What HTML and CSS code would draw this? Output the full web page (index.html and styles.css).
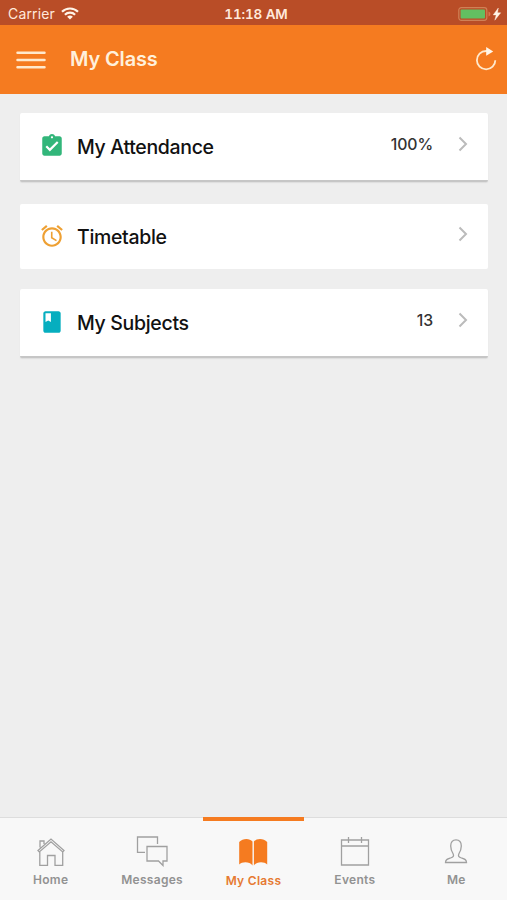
FILE: index.html
```html
<!DOCTYPE html>
<html lang="en">

<head>
    <meta charset="UTF-8">
    <meta name="viewport" content="width=device-width, initial-scale=1.0">
    <title>My Class</title>
    <link rel="stylesheet" href="styles.css">
</head>

<body>

    <!-- Status bar -->
    <div class="status-bar">
        <div class="carrier">
            <span>Carrier</span>
            <svg width="18" height="13" viewBox="0 0 18 13" fill="none" stroke="#fff4e8" stroke-width="2.2">
                <path d="M1 4.8a11.4 11.4 0 0 1 16 0" />
                <path d="M3.9 7.8a7.3 7.3 0 0 1 10.2 0" />
                <path d="M9 12.6L6.1 9.8a4.2 4.2 0 0 1 5.8 0z" fill="#fff4e8" stroke="none" />
            </svg>
        </div>
        <div class="time">11:18 AM</div>
        <div class="battery">
            <svg width="44" height="16" viewBox="0 0 44 16">
                <rect x="0.8" y="1.7" width="28" height="12.6" rx="2.5" fill="none" stroke="#cf8156" stroke-width="1.2" />
                <rect x="2.6" y="3.5" width="24.4" height="9" rx="1" fill="#63bf61" />
                <path d="M30.5 5.5q2 .8 2 2.5t-2 2.5z" fill="#dc7550" />
                <path d="M40.3 2l-5.1 6.9h3l-1.4 5.3 5.9-7.4h-3.2z" fill="#fff4e8" stroke="#fff4e8" stroke-width="0.4" />
            </svg>
        </div>
    </div>

    <!-- Header -->
    <div class="header">
        <svg class="menu" width="30" height="20" viewBox="0 0 30 20" stroke="#ffe9cd" stroke-width="2.5" stroke-linecap="round">
            <path d="M1.5 2.8h27M1.5 10.1h27M1.5 17.3h27" />
        </svg>
        <h1>My Class</h1>
        <svg class="refresh" width="22" height="26" viewBox="0 0 22 26">
            <path d="M20.3 13.2a9.2 9.2 0 1 1-9.2-9.2h2" fill="none" stroke="#ffe9cd" stroke-width="1.8" />
            <path d="M11.2.1l7 4.3-7 4.3z" fill="#fff5e8" />
        </svg>
    </div>

    <!-- Cards -->
    <ul class="cards">
        <li class="card raised">
            <svg class="icon" width="26" height="26" viewBox="0 0 24 24" fill="#32b67a">
                <path d="M19 3h-4.18C14.4 1.84 13.3 1 12 1s-2.4.84-2.82 2H5c-1.1 0-2 .9-2 2v14c0 1.1.9 2 2 2h14c1.1 0 2-.9 2-2V5c0-1.1-.9-2-2-2zm-7 0c.55 0 1 .45 1 1s-.45 1-1 1-1-.45-1-1 .45-1 1-1zm-2 14l-4-4 1.41-1.41L10 14.17l6.59-6.59L18 9l-8 8z" />
            </svg>
            <span class="label">My Attendance</span>
            <span class="value">100%</span>
            <svg class="chevron" width="10" height="16" viewBox="0 0 10 16">
                <path d="M1.5 1.5L8 8l-6.5 6.5" />
            </svg>
        </li>
        <li class="card flat">
            <svg class="icon" width="26" height="26" viewBox="0 0 24 24" fill="#eea033">
                <path d="M22 5.72l-4.6-3.86-1.29 1.53 4.6 3.86L22 5.72zM7.88 3.39L6.6 1.86 2 5.71l1.29 1.53 4.59-3.85zM12.5 8H11v6l4.75 2.85.75-1.23-4-2.37V8zM12 4c-4.97 0-9 4.03-9 9s4.02 9 9 9c4.97 0 9-4.03 9-9s-4.03-9-9-9zm0 16c-3.87 0-7-3.13-7-7s3.13-7 7-7 7 3.13 7 7-3.13 7-7 7z" />
            </svg>
            <span class="label">Timetable</span>
            <svg class="chevron" width="10" height="16" viewBox="0 0 10 16">
                <path d="M1.5 1.5L8 8l-6.5 6.5" />
            </svg>
        </li>
        <li class="card raised">
            <svg class="icon" width="26" height="26" viewBox="0 0 24 24" fill="#06aebf">
                <path d="M18 2H6c-1.1 0-2 .9-2 2v16c0 1.1.9 2 2 2h12c1.1 0 2-.9 2-2V4c0-1.1-.9-2-2-2zM6 4h5v8l-2.5-1.5L6 12V4z" />
            </svg>
            <span class="label">My Subjects</span>
            <span class="value">13</span>
            <svg class="chevron" width="10" height="16" viewBox="0 0 10 16">
                <path d="M1.5 1.5L8 8l-6.5 6.5" />
            </svg>
        </li>
    </ul>

    <!-- Bottom tabs -->
    <div class="tabs">
        <div class="tab">
            <svg width="32" height="32" viewBox="0 0 32 32">
                <path d="M3 15.5L16 4l13 11.5-1.3 1.4L16 6.8 4.3 16.9zM5 12.5V6h4v3M4.8 17v13.3h7.7v-9.8h7.5v9.8h7.7V17" />
            </svg>
            <span>Home</span>
        </div>
        <div class="tab">
            <svg width="32" height="32" viewBox="0 0 32 32">
                <path d="M9 17.3H1.5V2h20v7" />
                <path d="M11 11.5h20V26h-4v4.5L22.5 26H11z" />
            </svg>
            <span>Messages</span>
        </div>
        <div class="tab active">
            <svg width="32" height="32" viewBox="0 0 32 32">
                <path d="M15.5 6.5C12.7 3 5.7 3 2.2 7v22.5c3-3 10.5-3 13.3 1zM16.9 6.5C19.7 3 26.7 3 30.2 7v22.5c-3-3-10.5-3-13.3 1z" />
            </svg>
            <span>My Class</span>
        </div>
        <div class="tab">
            <svg width="32" height="32" viewBox="0 0 32 32">
                <path d="M2.5 5h27v25h-27zM2.5 11h27M9.5 2v6M22.5 2v6" />
            </svg>
            <span>Events</span>
        </div>
        <div class="tab">
            <svg width="32" height="32" viewBox="0 0 32 32">
                <path d="M5.500 27.500c0-3 2-3.500 5-4.500 3-.9 3.500-2 2.700-4-1.600-2.500-2.500-4.500-2.500-8 0-4 2-6.200 5.300-6.200s5.300 2.200 5.300 6.200c0 3.500-.9 5.500-2.500 8-.8 2-.3 3.100 2.700 4 3 1 5 1.500 5 4.500z" />
            </svg>
            <span>Me</span>
        </div>
    </div>

</body>

</html>
```
FILE: styles.css
```css
* {
    box-sizing: border-box;
}

body {
    font-family: Inter, sans-serif;
    background-color: #eee;
    color: #111;
    margin: 0;
    height: 900px;
    display: flex;
    flex-direction: column;
    overflow: hidden;
}

svg {
    display: block;
    flex: none;
}

.status-bar {
    display: grid;
    grid-template-columns: 1fr auto 1fr;
    align-items: center;
    height: 25px;
    padding: 2px 5px 0 8px;
    background-color: #b94d27;
    color: #ffe9dc;
    font-size: 14px;
}

.carrier {
    display: flex;
    align-items: center;
    gap: 6px;
    letter-spacing: 0.15px;
}

.time {
    padding-left: 2px;
    font-weight: 600;
    font-size: 13.5px;
    font-variant-numeric: tabular-nums;
    letter-spacing: -0.15px;
}

.battery {
    justify-self: end;
}

.header {
    display: flex;
    align-items: center;
    height: 69px;
    padding: 0 10px 0 16px;
    background-color: #f57b20;
    color: #fff0db;
}

.header h1 {
    margin: 0 auto 2px 24px;
    font-size: 20px;
    font-weight: 600;
    letter-spacing: -0.15px;
}

.cards {
    flex: 1;
    display: flex;
    flex-direction: column;
    gap: 21px;
    list-style-type: none;
    margin: 0;
    padding: 19px 19px 0 20px;
}

.card {
    display: flex;
    align-items: center;
    height: 69px;
    padding: 0 20px 0 19px;
    background-color: #fff;
    border-radius: 2px;
}

.card.raised {
    border-bottom: 2px solid #c6c6c6;
    box-shadow: 0 1px 1px #ddd;
}

.card.flat {
    height: 65px;
    margin: 1px 0 -1px;
}

.icon {
    margin-bottom: 2px;
}

.label {
    margin: 0 auto 0 12px;
    font-size: 19.5px;
    font-weight: 500;
    letter-spacing: -0.33px;
}

.value {
    margin: 0 25px 5px 0;
    font-size: 15.8px;
    font-weight: 500;
    letter-spacing: -0.1px;
    color: #333;
}

.chevron {
    margin-bottom: 5px;
    fill: none;
    stroke: #bbb;
    stroke-width: 2;
}

/* Bottom tab bar */
.tabs {
    display: grid;
    grid-template-columns: repeat(5, 1fr);
    height: 83px;
    background-color: #f8f8f8;
}

.tab {
    display: flex;
    flex-direction: column;
    align-items: center;
    padding-top: 17px;
    border-top: 1px solid #ddd;
    color: #929292;
    font-size: 12px;
    font-weight: 600;
    letter-spacing: 0.3px;
}

.tab svg {
    margin-bottom: 5px;
    fill: none;
    stroke: #a0a0a0;
    stroke-width: 1.3;
}

.tab.active {
    padding-top: 14px;
    border-top: 4px solid #f57b20;
    color: #e67a33;
}

.tab.active svg {
    margin-bottom: 6px;
    fill: #f57b20;
    stroke: none;
}
```
